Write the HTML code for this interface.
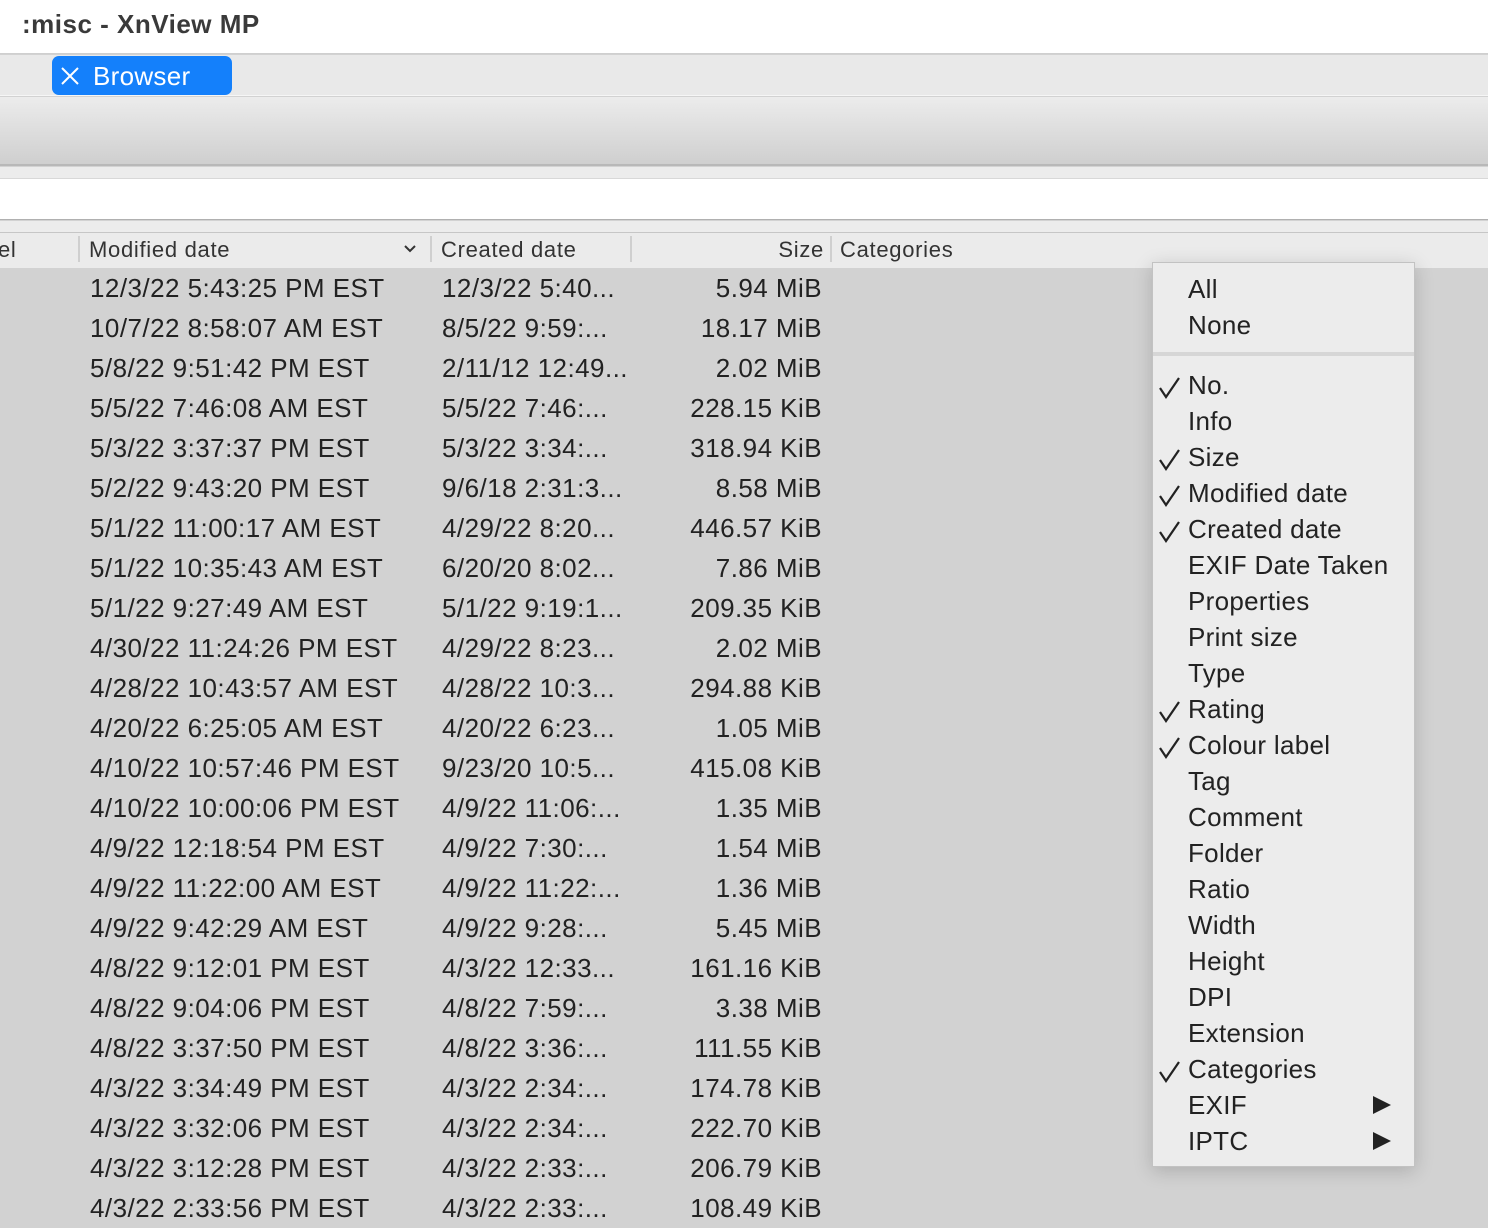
<!DOCTYPE html>
<html><head><meta charset="utf-8"><style>
*{margin:0;padding:0;box-sizing:border-box}
body{width:1488px;height:1220px;overflow:hidden;background:#d2d2d2;font-family:"Liberation Sans",Arial,sans-serif;color:#222;position:relative}
.abs{position:absolute}
#title{left:0;top:0;width:1488px;height:54px;background:#fff;border-bottom:1px solid #cfcfcf}
#title span{position:absolute;left:22px;top:9px;font-size:26px;font-weight:bold;color:#3a3a3a;letter-spacing:0.5px}
#tabs{left:0;top:55px;width:1488px;height:41px;background:#e9e9e9;border-bottom:1px solid #f6f6f6}
#tab{left:52px;top:56px;width:180px;height:39px;background:#1480fb;border-radius:7px;color:#fff;font-size:26px;letter-spacing:0.3px}
#tool{left:0;top:97px;width:1488px;height:69px;background:linear-gradient(#ececec,#cfcfcf);border-bottom:2px solid #b8b8b8}
#strip{left:0;top:167px;width:1488px;height:12px;background:#ececec;border-bottom:1px solid #d8d8d8}
#search{left:0;top:179px;width:1488px;height:41px;background:#fff;border-bottom:1px solid #b0b0b0}
#strip2{left:0;top:221px;width:1488px;height:12px;background:#ececec;border-bottom:1px solid #c6c6c6}
#head{left:0;top:233px;width:1488px;height:35px;background:#ebebeb;font-size:22px;color:#333;letter-spacing:0.7px}
.h{position:absolute;top:4px}
.sep{position:absolute;top:3px;width:2px;height:26px;background:#cfcfcf}
.row{position:absolute;left:0;width:1150px;height:40px;font-size:26px;line-height:40px;letter-spacing:0.45px}
.row span{position:absolute}
.m{left:90px}.c{left:442px}.s{right:328px}
#menu{left:1152px;top:262px;width:263px;height:905px;background:#ececec;border:1px solid #c2c2c2;box-shadow:0 4px 18px rgba(0,0,0,.18);font-size:26px;letter-spacing:0.3px}
.mi{position:absolute;left:35px;top:0;height:36px;line-height:34px}
.ck{position:absolute;left:-30px;top:9px}
.arr{position:absolute;left:1373px;width:0;height:0;border-left:18px solid #222;border-top:9px solid transparent;border-bottom:9px solid transparent}
</style></head><body>
<div id="title" class="abs"><span>:misc - XnView MP</span></div>
<div id="tabs" class="abs"></div>
<div id="tab" class="abs"><svg class="abs" style="left:9px;top:11px" width="18" height="18"><path d="M1 1L17 17M17 1L1 17" stroke="#fff" stroke-width="2"/></svg><span class="abs" style="left:41px;top:5px">Browser</span></div>
<div id="tool" class="abs"></div>
<div id="strip" class="abs"></div>
<div id="search" class="abs"></div>
<div id="strip2" class="abs"></div>
<div id="head" class="abs">
<span class="h" style="left:-2px">el</span>
<div class="sep" style="left:78px"></div>
<span class="h" style="left:89px">Modified date</span>
<svg class="abs" style="left:404px;top:12px" width="12" height="8"><path d="M1 1L6 6L11 1" stroke="#333" stroke-width="2" fill="none"/></svg>
<div class="sep" style="left:430px"></div>
<span class="h" style="left:441px">Created date</span>
<div class="sep" style="left:630px"></div>
<span class="h" style="right:664px">Size</span>
<div class="sep" style="left:830px"></div>
<span class="h" style="left:840px">Categories</span>
</div>
<div class="row" style="top:268px"><span class="m">12/3/22 5:43:25 PM EST</span><span class="c">12/3/22 5:40...</span><span class="s">5.94 MiB</span></div>
<div class="row" style="top:308px"><span class="m">10/7/22 8:58:07 AM EST</span><span class="c">8/5/22 9:59:...</span><span class="s">18.17 MiB</span></div>
<div class="row" style="top:348px"><span class="m">5/8/22 9:51:42 PM EST</span><span class="c">2/11/12 12:49...</span><span class="s">2.02 MiB</span></div>
<div class="row" style="top:388px"><span class="m">5/5/22 7:46:08 AM EST</span><span class="c">5/5/22 7:46:...</span><span class="s">228.15 KiB</span></div>
<div class="row" style="top:428px"><span class="m">5/3/22 3:37:37 PM EST</span><span class="c">5/3/22 3:34:...</span><span class="s">318.94 KiB</span></div>
<div class="row" style="top:468px"><span class="m">5/2/22 9:43:20 PM EST</span><span class="c">9/6/18 2:31:3...</span><span class="s">8.58 MiB</span></div>
<div class="row" style="top:508px"><span class="m">5/1/22 11:00:17 AM EST</span><span class="c">4/29/22 8:20...</span><span class="s">446.57 KiB</span></div>
<div class="row" style="top:548px"><span class="m">5/1/22 10:35:43 AM EST</span><span class="c">6/20/20 8:02...</span><span class="s">7.86 MiB</span></div>
<div class="row" style="top:588px"><span class="m">5/1/22 9:27:49 AM EST</span><span class="c">5/1/22 9:19:1...</span><span class="s">209.35 KiB</span></div>
<div class="row" style="top:628px"><span class="m">4/30/22 11:24:26 PM EST</span><span class="c">4/29/22 8:23...</span><span class="s">2.02 MiB</span></div>
<div class="row" style="top:668px"><span class="m">4/28/22 10:43:57 AM EST</span><span class="c">4/28/22 10:3...</span><span class="s">294.88 KiB</span></div>
<div class="row" style="top:708px"><span class="m">4/20/22 6:25:05 AM EST</span><span class="c">4/20/22 6:23...</span><span class="s">1.05 MiB</span></div>
<div class="row" style="top:748px"><span class="m">4/10/22 10:57:46 PM EST</span><span class="c">9/23/20 10:5...</span><span class="s">415.08 KiB</span></div>
<div class="row" style="top:788px"><span class="m">4/10/22 10:00:06 PM EST</span><span class="c">4/9/22 11:06:...</span><span class="s">1.35 MiB</span></div>
<div class="row" style="top:828px"><span class="m">4/9/22 12:18:54 PM EST</span><span class="c">4/9/22 7:30:...</span><span class="s">1.54 MiB</span></div>
<div class="row" style="top:868px"><span class="m">4/9/22 11:22:00 AM EST</span><span class="c">4/9/22 11:22:...</span><span class="s">1.36 MiB</span></div>
<div class="row" style="top:908px"><span class="m">4/9/22 9:42:29 AM EST</span><span class="c">4/9/22 9:28:...</span><span class="s">5.45 MiB</span></div>
<div class="row" style="top:948px"><span class="m">4/8/22 9:12:01 PM EST</span><span class="c">4/3/22 12:33...</span><span class="s">161.16 KiB</span></div>
<div class="row" style="top:988px"><span class="m">4/8/22 9:04:06 PM EST</span><span class="c">4/8/22 7:59:...</span><span class="s">3.38 MiB</span></div>
<div class="row" style="top:1028px"><span class="m">4/8/22 3:37:50 PM EST</span><span class="c">4/8/22 3:36:...</span><span class="s">111.55 KiB</span></div>
<div class="row" style="top:1068px"><span class="m">4/3/22 3:34:49 PM EST</span><span class="c">4/3/22 2:34:...</span><span class="s">174.78 KiB</span></div>
<div class="row" style="top:1108px"><span class="m">4/3/22 3:32:06 PM EST</span><span class="c">4/3/22 2:34:...</span><span class="s">222.70 KiB</span></div>
<div class="row" style="top:1148px"><span class="m">4/3/22 3:12:28 PM EST</span><span class="c">4/3/22 2:33:...</span><span class="s">206.79 KiB</span></div>
<div class="row" style="top:1188px"><span class="m">4/3/22 2:33:56 PM EST</span><span class="c">4/3/22 2:33:...</span><span class="s">108.49 KiB</span></div>

<div id="menu" class="abs">
<div class="mi" style="top:9px">All</div>
<div class="mi" style="top:45px">None</div>
<div class="abs" style="left:0;top:89px;width:261px;height:4px;background:#d6d6d6"></div>
<div class="mi" style="top:105px"><svg class="ck" width="24" height="22"><path d="M2 11L8 20L21 1" stroke="#222" stroke-width="2.2" fill="none"/></svg>No.</div>
<div class="mi" style="top:141px">Info</div>
<div class="mi" style="top:177px"><svg class="ck" width="24" height="22"><path d="M2 11L8 20L21 1" stroke="#222" stroke-width="2.2" fill="none"/></svg>Size</div>
<div class="mi" style="top:213px"><svg class="ck" width="24" height="22"><path d="M2 11L8 20L21 1" stroke="#222" stroke-width="2.2" fill="none"/></svg>Modified date</div>
<div class="mi" style="top:249px"><svg class="ck" width="24" height="22"><path d="M2 11L8 20L21 1" stroke="#222" stroke-width="2.2" fill="none"/></svg>Created date</div>
<div class="mi" style="top:285px">EXIF Date Taken</div>
<div class="mi" style="top:321px">Properties</div>
<div class="mi" style="top:357px">Print size</div>
<div class="mi" style="top:393px">Type</div>
<div class="mi" style="top:429px"><svg class="ck" width="24" height="22"><path d="M2 11L8 20L21 1" stroke="#222" stroke-width="2.2" fill="none"/></svg>Rating</div>
<div class="mi" style="top:465px"><svg class="ck" width="24" height="22"><path d="M2 11L8 20L21 1" stroke="#222" stroke-width="2.2" fill="none"/></svg>Colour label</div>
<div class="mi" style="top:501px">Tag</div>
<div class="mi" style="top:537px">Comment</div>
<div class="mi" style="top:573px">Folder</div>
<div class="mi" style="top:609px">Ratio</div>
<div class="mi" style="top:645px">Width</div>
<div class="mi" style="top:681px">Height</div>
<div class="mi" style="top:717px">DPI</div>
<div class="mi" style="top:753px">Extension</div>
<div class="mi" style="top:789px"><svg class="ck" width="24" height="22"><path d="M2 11L8 20L21 1" stroke="#222" stroke-width="2.2" fill="none"/></svg>Categories</div>
<div class="mi" style="top:825px">EXIF</div>
<div class="mi" style="top:861px">IPTC</div>
</div>
<div class="arr" style="top:1096px"></div>
<div class="arr" style="top:1132px"></div>
</body></html>
